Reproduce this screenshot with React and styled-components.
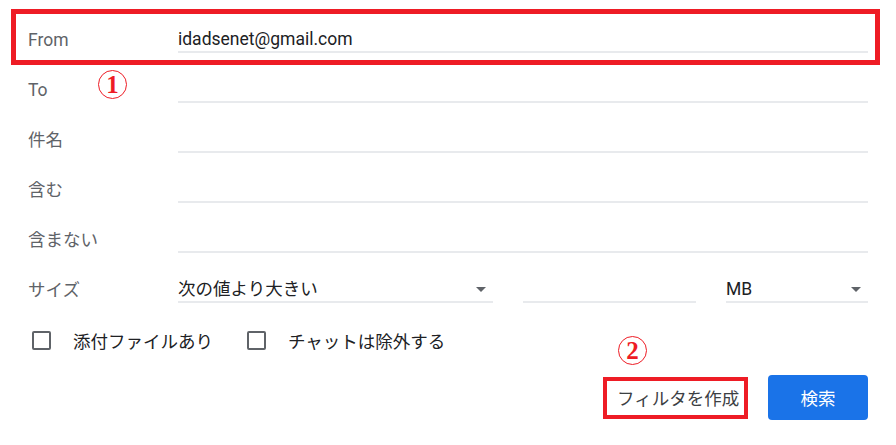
import React from "react";
import styled, { createGlobalStyle } from "styled-components";

const Global = createGlobalStyle`
  html, body { margin: 0; padding: 0; background: #fff; }
  body { font-family: Roboto, "Noto Sans CJK JP", sans-serif; }
`;

const RED = "#ee1c25";

const Page = styled.div`
  position: relative;
  width: 840px;
  padding: 3px 28px 0 28px;
`;

const Row = styled.div`
  position: relative;
  display: grid;
  grid-template-columns: 150px 1fr;
  align-items: end;
  height: 50px;
  ${(p) =>
    p.$highlight &&
    `
    &::before {
      content: "";
      position: absolute;
      top: 6px; left: -17px; right: -12px; bottom: -12px;
      border: 5px solid ${RED};
      pointer-events: none;
    }
  `}
`;

const Label = styled.div`
  font-size: 17.5px;
  color: #5f6368;
  padding-bottom: 3px;
  line-height: 20px;
`;

const Field = styled.div`
  position: relative;
  height: 28px;
  box-sizing: border-box;
  border-bottom: 2px solid #e8eaed;
  font-size: 17.5px;
  color: #202124;
  line-height: 20px;
  padding-top: 4px;
  display: flex;
  align-items: flex-start;
  justify-content: space-between;
`;

const SizeFields = styled.div`
  display: grid;
  grid-template-columns: 315px 173px 142px;
  column-gap: 30px;
`;

const Arrow = styled.span`
  width: 0;
  height: 0;
  border-left: 5px solid transparent;
  border-right: 5px solid transparent;
  border-top: 5px solid #5f6368;
  margin: 8px 7px 0 0;
`;

const Circled = styled.span`
  position: absolute;
  width: 29px;
  height: 29px;
  box-sizing: border-box;
  border: 1.5px solid ${RED};
  border-radius: 50%;
  color: ${RED};
  font-family: "Liberation Serif", serif;
  font-weight: bold;
  font-size: 25px;
  line-height: 27px;
  text-align: center;
  left: ${(p) => p.$x}px;
  top: ${(p) => p.$y}px;
`;

const CheckRow = styled.div`
  display: flex;
  align-items: center;
  height: 18px;
  margin-top: 28px;
  padding-left: 4px;
`;

const CheckItem = styled.label`
  display: flex;
  align-items: center;
  margin-right: 34px;
  font-size: 17.5px;
  color: #202124;
`;

const Box = styled.span`
  width: 19px;
  height: 19px;
  box-sizing: border-box;
  border: 2px solid #5f6368;
  border-radius: 2px;
  margin-right: 22px;
`;

const Actions = styled.div`
  display: flex;
  justify-content: flex-end;
  align-items: center;
  margin-top: 26px;
  gap: 20px;
`;

const TextButton = styled.button`
  position: relative;
  background: none;
  border: none;
  width: 145px;
  height: 42px;
  padding: 0 0 0 14px;
  text-align: left;
  font-family: "Noto Sans CJK JP", sans-serif;
  font-size: 17.5px;
  color: #3c4043;
  ${(p) =>
    p.$highlight &&
    `
    &::before {
      content: "";
      position: absolute;
      inset: 0;
      border: 4px solid ${RED};
    }
  `}
`;

const PrimaryButton = styled.button`
  width: 100px;
  height: 45px;
  border: none;
  border-radius: 4px;
  background: #1a73e8;
  color: #fff;
  font-family: "Noto Sans CJK JP", sans-serif;
  font-size: 17.5px;
`;

export default function App() {
  return (
    <>
      <Global />
      <Page>
        <Row $highlight>
          <Label>From</Label>
          <Field>idadsenet@gmail.com</Field>
        </Row>
        <Row>
          <Label>To</Label>
          <Field />
        </Row>
        <Row>
          <Label>件名</Label>
          <Field />
        </Row>
        <Row>
          <Label>含む</Label>
          <Field />
        </Row>
        <Row>
          <Label>含まない</Label>
          <Field />
        </Row>
        <Row>
          <Label>サイズ</Label>
          <SizeFields>
            <Field>
              次の値より大きい
              <Arrow />
            </Field>
            <Field />
            <Field>
              MB
              <Arrow />
            </Field>
          </SizeFields>
        </Row>
        <CheckRow>
          <CheckItem>
            <Box />
            添付ファイルあり
          </CheckItem>
          <CheckItem>
            <Box />
            チャットは除外する
          </CheckItem>
        </CheckRow>
        <Actions>
          <TextButton $highlight>フィルタを作成</TextButton>
          <PrimaryButton>検索</PrimaryButton>
        </Actions>
        <Circled $x={98} $y={70}>1</Circled>
        <Circled $x={618} $y={336}>2</Circled>
      </Page>
    </>
  );
}
